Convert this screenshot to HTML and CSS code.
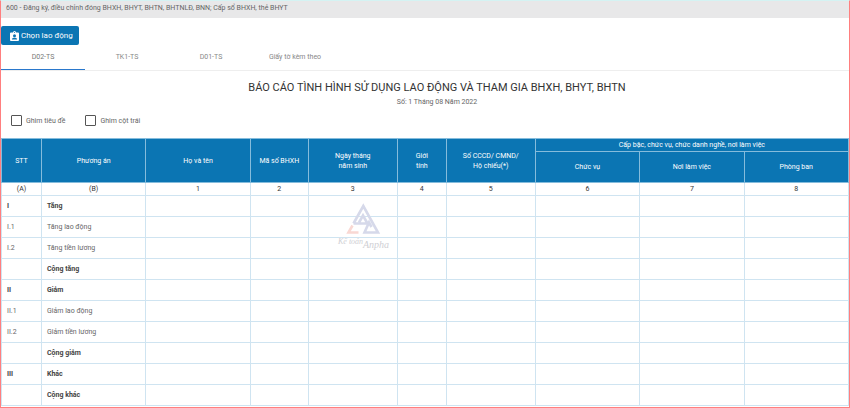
FILE: index.html
```html
<!DOCTYPE html>
<html lang="vi">
<head>
    <meta charset="UTF-8">
    <meta name="viewport" content="width=device-width, initial-scale=1.0">
    <title>600 - Báo cáo tình hình sử dụng lao động</title>
    <link rel="stylesheet" href="styles.css">
</head>
<body>
    <div class="page">
        <div class="top-bar">600 - Đăng ký, điều chỉnh đóng BHXH, BHYT, BHTN, BHTNLĐ, BNN; Cấp sổ BHXH, thẻ BHYT</div>

        <div class="toolbar">
            <button type="button" class="btn">
                <svg class="btn-icon" viewBox="0 0 18 20" aria-hidden="true">
                    <path fill="#fff" fill-rule="evenodd" d="M2 3h4a3 3 0 0 1 6 0h4a2 2 0 0 1 2 2v13a2 2 0 0 1-2 2H2a2 2 0 0 1-2-2V5a2 2 0 0 1 2-2zm7-1.200a1 1 0 1 0 0 2 1 1 0 0 0 0-2zM9 6.500a3 3 0 1 0 0 6 3 3 0 0 0 0-6zM4 17h10v-1.200c0-1.500-3-2.300-5-2.300s-5 .8-5 2.300z"/>
                </svg>
                Chọn lao động
            </button>
        </div>

        <nav class="tabs">
            <a href="#d02" class="tab active">D02-TS</a>
            <a href="#tk1" class="tab">TK1-TS</a>
            <a href="#d01" class="tab">D01-TS</a>
            <a href="#files" class="tab">Giấy tờ kèm theo</a>
        </nav>

        <div class="heading">
            <h1>BÁO CÁO TÌNH HÌNH SỬ DỤNG LAO ĐỘNG VÀ THAM GIA BHXH, BHYT, BHTN</h1>
            <p>Số: 1 Tháng 08 Năm 2022</p>
        </div>

        <div class="options">
            <label for="pin-title"><input type="checkbox" id="pin-title">Ghim tiêu đề</label>
            <label for="pin-left"><input type="checkbox" id="pin-left">Ghim cột trái</label>
        </div>

        <div class="table-wrap">
            <table>
                <colgroup>
                    <col class="col-stt">
                    <col class="col-wide">
                    <col class="col-wide">
                    <col class="col-code">
                    <col class="col-date">
                    <col class="col-gender">
                    <col class="col-date">
                    <col class="col-wide">
                    <col class="col-wide">
                    <col class="col-wide">
                </colgroup>
                <thead>
                    <tr class="group-row">
                        <th rowspan="2">STT</th>
                        <th rowspan="2">Phương án</th>
                        <th rowspan="2">Họ và tên</th>
                        <th rowspan="2">Mã số BHXH</th>
                        <th rowspan="2">Ngày tháng<br>năm sinh</th>
                        <th rowspan="2">Giới<br>tính</th>
                        <th rowspan="2">Số CCCD/ CMND/<br>Hộ chiếu(*)</th>
                        <th colspan="3">Cấp bậc, chức vụ, chức danh nghề, nơi làm việc</th>
                    </tr>
                    <tr class="sub-row">
                        <th>Chức vụ</th>
                        <th>Nơi làm việc</th>
                        <th>Phòng ban</th>
                    </tr>
                </thead>
                <tbody>
                    <tr class="index-row"><td>(A)</td><td>(B)</td><td>1</td><td>2</td><td>3</td><td>4</td><td>5</td><td>6</td><td>7</td><td>8</td></tr>
                    <tr class="bold"><td>I</td><td>Tăng</td><td></td><td></td><td></td><td></td><td></td><td></td><td></td><td></td></tr>
                    <tr><td>I.1</td><td>Tăng lao động</td><td></td><td></td><td></td><td></td><td></td><td></td><td></td><td></td></tr>
                    <tr><td>I.2</td><td>Tăng tiền lương</td><td></td><td></td><td></td><td></td><td></td><td></td><td></td><td></td></tr>
                    <tr class="bold"><td></td><td>Cộng tăng</td><td></td><td></td><td></td><td></td><td></td><td></td><td></td><td></td></tr>
                    <tr class="bold"><td>II</td><td>Giảm</td><td></td><td></td><td></td><td></td><td></td><td></td><td></td><td></td></tr>
                    <tr><td>II.1</td><td>Giảm lao động</td><td></td><td></td><td></td><td></td><td></td><td></td><td></td><td></td></tr>
                    <tr><td>II.2</td><td>Giảm tiền lương</td><td></td><td></td><td></td><td></td><td></td><td></td><td></td><td></td></tr>
                    <tr class="bold"><td></td><td>Cộng giảm</td><td></td><td></td><td></td><td></td><td></td><td></td><td></td><td></td></tr>
                    <tr class="bold"><td>III</td><td>Khác</td><td></td><td></td><td></td><td></td><td></td><td></td><td></td><td></td></tr>
                    <tr class="bold"><td></td><td>Cộng khác</td><td></td><td></td><td></td><td></td><td></td><td></td><td></td><td></td></tr>
                </tbody>
            </table>

            <!-- Watermark over the table -->
            <svg class="watermark" viewBox="0 0 54 50" role="img" aria-label="Kế toán Anpha">
                <g fill="none" stroke-width="2.600">
                    <path stroke="#d6d9ea" d="M17.500 20.500L27.300 3L42 29.500H28.500L33 19.500L35.500 24M17.500 20.500H31.500L27 12.500L23 19.500"/>
                    <path stroke="#f9d8d3" d="M16.500 22.500L12.500 29.500H22.500"/>
                </g>
                <text x="2" y="41" class="mark-text">Kế toán</text>
                <text x="27" y="45" class="mark-text mark-large">Anpha</text>
            </svg>
        </div>
    </div>
</body>
</html>
```
FILE: styles.css
```css
* {
    box-sizing: border-box;
}
body {
    margin: 0;
    font-family: Roboto, "Liberation Sans", sans-serif;
    font-size: 7px;
    color: #666;
    background-color: #fff;
}
.page {
    min-height: 100vh;
    border: 1px solid #ff7f7f;
    border-top-color: #d5f3f3;
}
.top-bar {
    height: 17px;
    padding-left: 5px;
    line-height: 14px;
    background-color: #e8e8e9;
}
.toolbar {
    padding-top: 8px;
}
.btn {
    display: flex;
    align-items: center;
    gap: 2px;
    height: 19px;
    padding: 0 6px 0 9px;
    border: none;
    border-radius: 2px;
    background-color: #0b75b3;
    color: #fff;
    font-family: inherit;
    font-size: 8px;
    cursor: pointer;
}
.btn-icon {
    width: 9px;
    height: 10px;
}
.tabs {
    display: flex;
    border-bottom: 1px solid #eee;
}
.tab {
    width: 84px;
    height: 25px;
    line-height: 25px;
    text-align: center;
    color: #888;
    text-decoration: none;
    white-space: nowrap;
}
.tab.active {
    border-bottom: 1px solid #2a78cc;
    color: #777;
}
.heading {
    padding-left: 24px;
    text-align: center;
}
.heading h1 {
    margin: 10px 0 0;
    font-size: 11px;
    font-weight: 400;
    line-height: 14px;
    color: #333;
}
.heading p {
    margin: 0;
    line-height: 14px;
}
.options {
    display: flex;
    gap: 20px;
    padding: 6px 10px 12px;
}
.options label {
    display: flex;
    align-items: center;
    gap: 4px;
}
.options input {
    appearance: none;
    width: 11px;
    height: 11px;
    margin: 0;
    border: 1px solid #555;
    border-radius: 1px;
}
.table-wrap {
    position: relative;
}
table {
    width: 100%;
    table-layout: fixed;
    border-collapse: collapse;
}
.col-stt {
    width: 40px;
}
.col-code {
    width: 58px;
}
.col-date {
    width: 89px;
}
.col-gender {
    width: 49px;
}
th,
td {
    padding: 0;
    border: 1px solid #cfe4f1;
}
th {
    background-color: #0b75b3;
    border-color: #85bcdc;
    color: #fff;
    font-weight: 400;
    line-height: 10px;
    text-align: center;
}
.group-row {
    height: 13px;
}
.sub-row {
    height: 31px;
}
tbody tr {
    height: 21px;
}
tbody td {
    padding-left: 5px;
}
tbody .index-row {
    height: 13px;
}
.index-row td {
    padding: 0;
    text-align: center;
    color: #333;
}
.bold td {
    font-weight: 700;
    color: #444;
}
.watermark {
    position: absolute;
    top: 65px;
    left: 335px;
    width: 54px;
    height: 50px;
}
.mark-text {
    font-family: "Liberation Serif", serif;
    font-size: 8px;
    font-style: italic;
    fill: #cfcfd4;
}
.mark-large {
    font-size: 10px;
}
```
